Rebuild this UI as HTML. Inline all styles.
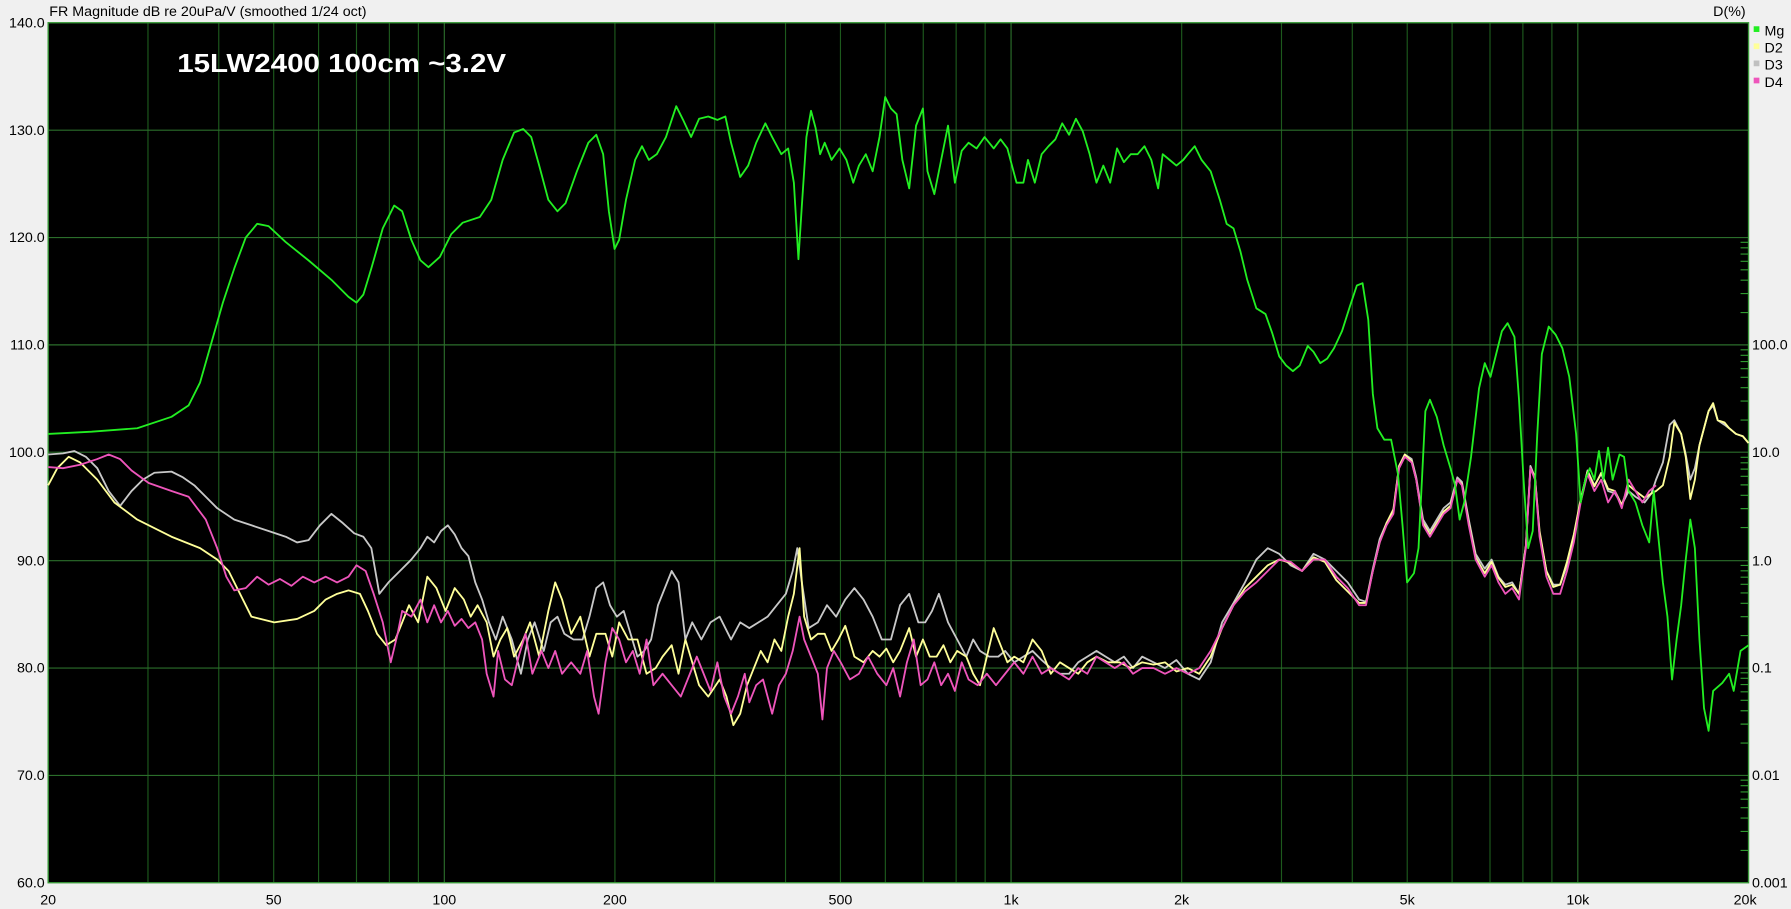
<!DOCTYPE html>
<html><head><meta charset="utf-8"><style>html,body{margin:0;padding:0;background:#f0f0f0;overflow:hidden}svg{display:block}</style></head>
<body>
<svg width="1791" height="909" viewBox="0 0 1568 796" xmlns="http://www.w3.org/2000/svg" font-family="Liberation Sans, sans-serif">
<rect width="1568" height="796" fill="#f0f0f0"/>
<rect x="42" y="19.9" width="1489" height="753.1" fill="#000"/>
<g stroke="#1d5a1d" stroke-width="1">
<line x1="129.4" y1="20" x2="129.4" y2="773"/><line x1="191.4" y1="20" x2="191.4" y2="773"/><line x1="239.5" y1="20" x2="239.5" y2="773"/><line x1="278.8" y1="20" x2="278.8" y2="773"/><line x1="312" y1="20" x2="312" y2="773"/><line x1="340.8" y1="20" x2="340.8" y2="773"/><line x1="366.2" y1="20" x2="366.2" y2="773"/>
<line x1="538.3" y1="20" x2="538.3" y2="773"/><line x1="625.7" y1="20" x2="625.7" y2="773"/><line x1="687.7" y1="20" x2="687.7" y2="773"/><line x1="735.8" y1="20" x2="735.8" y2="773"/><line x1="775.1" y1="20" x2="775.1" y2="773"/><line x1="808.3" y1="20" x2="808.3" y2="773"/><line x1="837.1" y1="20" x2="837.1" y2="773"/><line x1="862.5" y1="20" x2="862.5" y2="773"/>
<line x1="1034.6" y1="20" x2="1034.6" y2="773"/><line x1="1122" y1="20" x2="1122" y2="773"/><line x1="1184" y1="20" x2="1184" y2="773"/><line x1="1232.1" y1="20" x2="1232.1" y2="773"/><line x1="1271.4" y1="20" x2="1271.4" y2="773"/><line x1="1304.6" y1="20" x2="1304.6" y2="773"/><line x1="1333.4" y1="20" x2="1333.4" y2="773"/><line x1="1358.8" y1="20" x2="1358.8" y2="773"/>
</g>
<g stroke="#2b6e2b" stroke-width="1">
<line x1="388.9" y1="20" x2="388.9" y2="773"/><line x1="885.2" y1="20" x2="885.2" y2="773"/><line x1="1381.5" y1="20" x2="1381.5" y2="773"/>
<line x1="42" y1="114" x2="1531" y2="114"/><line x1="42" y1="208" x2="1531" y2="208"/><line x1="42" y1="302" x2="1531" y2="302"/><line x1="42" y1="396" x2="1531" y2="396"/><line x1="42" y1="491" x2="1531" y2="491"/><line x1="42" y1="585" x2="1531" y2="585"/><line x1="42" y1="679" x2="1531" y2="679"/>
</g>
<g stroke="#2f9a2f" stroke-width="1">
<path d="M1524 273.7h7M1524 257.1h7M1524 245.4h7M1524 236.3h7M1524 228.8h7M1524 222.5h7M1524 217h7M1524 212.2h7
M1524 367.8h7M1524 351.2h7M1524 339.5h7M1524 330.4h7M1524 322.9h7M1524 316.6h7M1524 311.1h7M1524 306.3h7
M1524 462h7M1524 445.4h7M1524 433.7h7M1524 424.6h7M1524 417.1h7M1524 410.8h7M1524 405.3h7M1524 400.5h7
M1524 556.6h7M1524 540h7M1524 528.3h7M1524 519.2h7M1524 511.7h7M1524 505.4h7M1524 499.9h7M1524 495.1h7
M1524 650.7h7M1524 634.1h7M1524 622.4h7M1524 613.3h7M1524 605.8h7M1524 599.5h7M1524 594h7M1524 589.2h7
M1524 744.7h7M1524 728.1h7M1524 716.4h7M1524 707.3h7M1524 699.8h7M1524 693.5h7M1524 688h7M1524 683.2h7"/>
</g>
<rect x="42" y="19.9" width="1489" height="753.1" fill="none" stroke="#3a9a3a" stroke-width="1.2"/>
<g fill="none" stroke-width="1.6" stroke-linejoin="round">
<polyline stroke="#c8c8c8" points="42,398 55,397 65,395 75,400 85,410 95,430 105,443 115,430 125,420 135,414 150,413 160,418 170,425 180,435 190,445 205,455 220,460 235,465 250,470 260,475 270,473 280,460 290,450 300,458 310,467 318,470 325,480 332,520 340,510 350,500 360,490 368,480 374,470 380,475 386,465 392,460 398,468 404,480 410,487 416,510 422,525 428,545 434,560 440,540 448,560 456,590 462,560 468,545 476,570 482,545 488,540 494,555 502,560 510,560 516,540 522,515 528,510 534,530 540,540 546,535 552,555 558,575 564,570 570,560 576,530 582,515 588,500 594,510 600,560 606,545 614,560 622,545 630,540 640,560 648,545 656,550 664,545 672,540 680,530 688,520 694,500 698,480 702,510 708,550 716,545 724,530 732,540 740,525 748,515 756,525 764,540 772,560 780,560 788,530 796,520 804,545 810,545 816,535 822,520 830,545 838,560 846,575 852,560 858,570 866,575 874,575 880,570 888,580 896,575 904,570 912,578 920,585 928,590 936,590 944,580 952,575 960,570 968,575 976,580 984,575 992,585 1000,575 1010,580 1020,585 1030,578 1040,590 1050,595 1060,580 1070,545 1080,528 1090,510 1100,490 1110,480 1120,485 1130,495 1140,500 1150,485 1160,490 1170,500 1180,510 1190,525 1196,527 1202,498 1208,472 1214,458 1220,448 1225,408 1230,398 1236,402 1240,418 1246,455 1252,465 1258,455 1264,445 1270,440 1276,418 1280,422 1286,455 1292,485 1300,498 1306,490 1312,505 1318,512 1324,510 1330,520 1336,478 1340,408 1344,418 1348,468 1354,500 1360,512 1366,512 1372,495 1378,470 1384,438 1390,412 1396,425 1402,415 1408,430 1414,432 1420,442 1426,430 1432,435 1440,440 1446,432 1450,420 1456,405 1462,372 1466,368 1472,380 1476,398 1480,420 1484,410 1488,390 1492,375 1496,360 1500,355 1504,368 1510,372 1514,375 1520,380 1526,382 1531,388"/>
<polyline stroke="#ffff99" points="42,425 50,410 60,400 70,405 85,420 100,440 120,455 150,470 175,480 190,490 200,500 210,520 220,540 240,545 260,542 275,535 285,525 295,520 305,517 315,520 322,535 330,555 338,565 346,560 352,545 358,530 366,545 374,505 382,515 390,535 398,515 406,525 412,540 418,530 426,545 432,575 438,560 444,550 450,575 458,560 464,545 472,575 480,535 486,510 492,525 500,555 508,540 516,575 522,555 530,555 536,575 542,545 550,560 558,560 566,590 574,585 580,575 588,565 594,590 600,560 606,580 612,600 620,610 630,595 636,610 642,635 648,625 654,600 660,585 666,570 672,580 678,560 684,570 690,540 695,520 700,480 704,540 710,560 716,555 722,555 728,570 734,560 740,548 748,575 756,580 764,570 770,575 776,568 782,580 788,570 796,550 802,575 808,560 814,575 820,575 826,565 832,580 838,570 846,575 852,590 858,600 864,575 870,550 876,565 882,580 888,575 896,580 904,560 912,570 920,590 928,580 936,585 944,590 952,580 960,575 970,580 980,580 990,585 1000,580 1010,582 1020,580 1030,588 1040,585 1050,590 1060,575 1070,550 1080,530 1090,515 1100,505 1110,495 1120,490 1130,493 1140,500 1150,488 1160,492 1170,508 1180,518 1190,528 1196,528 1202,500 1208,475 1214,458 1220,446 1225,408 1230,398 1236,404 1240,420 1246,458 1252,468 1258,458 1264,448 1270,443 1276,420 1280,424 1286,458 1292,488 1300,502 1306,492 1312,506 1318,514 1324,512 1330,520 1336,478 1340,410 1344,418 1348,465 1354,500 1360,514 1366,512 1372,492 1378,468 1384,437 1390,413 1396,426 1402,414 1408,428 1414,430 1420,442 1426,425 1432,430 1440,436 1446,432 1450,430 1456,425 1462,400 1466,370 1472,380 1476,400 1480,437 1484,420 1488,390 1492,375 1496,360 1500,353 1504,368 1510,370 1514,375 1520,380 1526,382 1531,388"/>
<polyline stroke="#ee55bb" points="42,409 55,410 70,407 85,402 95,398 105,402 115,412 130,423 150,430 165,435 180,455 190,480 198,505 205,517 215,515 225,505 235,512 245,507 255,513 265,505 275,510 285,505 295,510 305,505 312,495 320,500 327,520 335,545 342,580 348,555 352,535 360,540 368,525 374,545 380,530 386,545 392,535 398,548 404,542 410,550 416,545 422,560 426,590 432,610 436,570 442,595 448,600 454,575 460,555 466,590 474,570 480,585 486,570 492,590 500,580 508,590 514,570 520,610 524,625 530,580 536,550 542,560 548,580 554,570 560,590 566,560 572,600 580,590 588,600 596,610 604,590 610,575 616,590 622,605 628,580 634,610 640,625 646,610 652,590 656,615 662,600 668,595 672,610 676,625 682,600 688,590 694,570 700,540 704,560 710,575 716,590 720,630 724,585 730,570 736,580 744,595 752,590 760,575 768,590 776,600 782,585 788,610 794,580 800,560 806,600 812,595 818,580 824,600 830,590 836,605 842,580 848,595 856,600 864,590 872,600 880,590 888,580 896,590 904,575 912,590 920,585 928,590 936,595 944,585 952,590 960,575 968,580 976,585 984,580 992,590 1000,585 1010,585 1020,590 1030,585 1040,590 1050,585 1060,570 1070,550 1080,530 1090,518 1100,510 1110,500 1120,490 1130,492 1140,500 1150,490 1160,490 1170,505 1180,515 1190,530 1196,530 1202,500 1208,475 1214,460 1220,450 1225,410 1230,400 1236,405 1240,420 1246,460 1252,470 1258,460 1264,450 1270,445 1276,420 1280,425 1286,460 1292,490 1300,505 1306,495 1312,510 1318,520 1324,515 1330,525 1336,480 1340,410 1344,420 1348,470 1354,505 1360,520 1366,520 1372,500 1378,475 1384,440 1390,415 1396,430 1402,420 1408,440 1414,430 1420,445 1426,420 1432,430 1438,440 1444,430 1450,425"/>
<polyline stroke="#22ee22" points="42,380 80,378 120,375 150,365 165,355 175,335 185,300 195,265 205,235 215,208 225,196 235,198 250,212 270,228 290,245 305,260 312,265 318,258 325,235 335,200 345,180 352,185 360,210 368,228 375,234 385,225 395,205 405,195 420,190 430,175 440,140 450,116 458,113 465,120 472,145 480,175 488,185 495,178 505,150 515,125 522,118 528,135 533,185 538,218 542,210 548,175 556,140 562,128 568,140 575,135 583,120 592,93 598,105 605,120 612,104 620,102 628,105 635,102 640,125 648,155 655,145 662,125 670,108 676,120 684,135 690,130 695,160 699,227 702,180 706,120 710,97 714,112 718,135 722,125 728,140 735,130 741,140 747,160 752,145 758,135 764,150 770,120 775,85 780,95 785,100 790,140 796,165 802,110 808,95 812,150 818,170 824,140 830,110 836,160 842,132 848,125 855,130 862,120 870,130 876,122 882,130 890,160 896,160 900,140 906,160 912,135 918,128 924,122 930,108 936,118 942,104 948,115 954,135 960,160 966,145 972,160 978,130 984,142 990,135 996,135 1002,128 1008,140 1014,165 1018,135 1024,140 1030,145 1036,140 1040,135 1046,128 1052,140 1060,150 1068,175 1074,196 1080,200 1086,220 1092,245 1100,270 1108,275 1114,292 1120,312 1126,320 1132,325 1138,320 1145,303 1150,308 1156,318 1162,314 1168,305 1175,290 1182,268 1188,250 1193,248 1198,280 1202,345 1206,375 1212,385 1218,385 1224,415 1228,460 1232,510 1238,502 1242,480 1248,360 1252,350 1258,365 1264,390 1270,410 1274,425 1278,455 1282,440 1288,400 1295,340 1300,318 1305,330 1310,310 1315,290 1320,283 1326,295 1330,350 1334,420 1338,480 1342,465 1346,380 1350,310 1356,286 1362,293 1368,305 1374,330 1380,380 1384,440 1388,420 1392,410 1396,420 1400,395 1404,420 1408,392 1412,420 1418,398 1422,400 1426,430 1432,440 1438,460 1444,475 1448,430 1452,470 1456,510 1460,540 1464,595 1468,560 1472,530 1476,490 1480,455 1484,480 1488,560 1492,620 1496,640 1500,605 1508,598 1514,590 1518,605 1524,570 1531,565"/>
</g>
<text x="155" y="63" fill="#fff" font-size="23" font-weight="bold" textLength="288" lengthAdjust="spacingAndGlyphs">15LW2400 100cm ~3.2V</text>
<text x="43" y="14" font-size="12.5" fill="#000">FR Magnitude dB re 20uPa/V (smoothed 1/24 oct)</text>
<text x="1500" y="14" font-size="12.5" fill="#000">D(%)</text>
<g font-size="12.5" fill="#000" text-anchor="end">
<text x="39" y="24">140.0</text><text x="39" y="118">130.0</text><text x="39" y="212">120.0</text><text x="39" y="306">110.0</text><text x="39" y="400">100.0</text><text x="39" y="495">90.0</text><text x="39" y="589">80.0</text><text x="39" y="683">70.0</text><text x="39" y="777">60.0</text>
</g>
<g font-size="12.5" fill="#000">
<text x="1534" y="306">100.0</text><text x="1534" y="400">10.0</text><text x="1534" y="495">1.0</text><text x="1534" y="589">0.1</text><text x="1534" y="683">0.01</text><text x="1534" y="777">0.001</text>
</g>
<g font-size="12.5" fill="#000" text-anchor="middle">
<text x="42" y="792">20</text><text x="239.5" y="792">50</text><text x="388.9" y="792">100</text><text x="538.3" y="792">200</text><text x="735.8" y="792">500</text><text x="885.2" y="792">1k</text><text x="1034.6" y="792">2k</text><text x="1232.1" y="792">5k</text><text x="1381.5" y="792">10k</text><text x="1528" y="792">20k</text>
</g>
<rect x="1535.5" y="23" width="5" height="5" fill="#22ee22"/><text x="1545" y="31" font-size="12.5">Mg</text>
<rect x="1535.5" y="38" width="5" height="5" fill="#ffff99"/><text x="1545" y="46" font-size="12.5">D2</text>
<rect x="1535.5" y="53" width="5" height="5" fill="#c0c0c0"/><text x="1545" y="61" font-size="12.5">D3</text>
<rect x="1535.5" y="68" width="5" height="5" fill="#ee55bb"/><text x="1545" y="76" font-size="12.5">D4</text>
</svg>
</body></html>
